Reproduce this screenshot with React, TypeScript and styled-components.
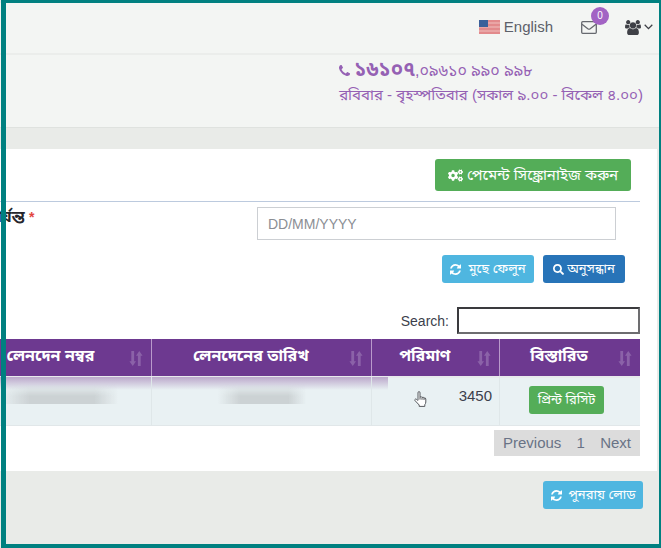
import React from 'react';
import styled, { createGlobalStyle } from 'styled-components';
import { FaCogs, FaSearch } from 'react-icons/fa';

const sans = `"Liberation Sans", "Noto Sans Bengali", sans-serif`;

const GlobalStyle = createGlobalStyle`
  *, *::before, *::after { box-sizing: border-box; }
  body { margin: 0; font-family: ${sans}; color: #3c3f4c; background: #e9ebe8; }
  button, input { font-family: inherit; }
`;

const Page = styled.div`
  position: relative;
  display: flex;
  flex-direction: column;
  min-height: 100vh;
  padding-top: 3px;
  overflow: hidden;
  background: #e9ebe8;

  &::after {
    content: '';
    position: absolute;
    inset: 0 0 0 1px;
    border: solid #008080;
    border-width: 3px 2px 4px 5px;
    pointer-events: none;
  }
`;

const TopBar = styled.nav`
  display: flex;
  align-items: center;
  justify-content: flex-end;
  height: 52px;
  padding: 0 8px 2px 0;
  background: #f3f5f3;
  border-bottom: 2px solid #ebedeb;
`;

const Language = styled.a`
  display: flex;
  align-items: center;
  gap: 4px;
  margin-right: 28px;
  color: #5c6069;
  font-size: 15px;
  line-height: 20px;
  text-decoration: none;
`;

const IconButton = styled.button<{ $end?: boolean }>`
  position: relative;
  display: flex;
  align-items: center;
  gap: 3px;
  margin-right: ${(p) => (p.$end ? '0' : '28px')};
  padding: 0;
  border: 0;
  background: none;
  color: ${(p) => (p.$end ? '#3e4046' : '#66696f')};
`;

const Badge = styled.span`
  position: absolute;
  right: -12px;
  bottom: 9px;
  width: 18px;
  height: 18px;
  border-radius: 50%;
  background: #a263c4;
  color: #fff;
  font-size: 10px;
  line-height: 18px;
  text-align: center;
`;

const Contact = styled.header`
  display: flex;
  justify-content: flex-end;
  height: 73px;
  padding: 2px 18px 0 0;
  background: #f3f5f3;
  border-bottom: 1px solid #dfe2df;
  color: #9561b4;
`;

const ContactText = styled.address`
  font-style: normal;
  font-size: 15px;
  line-height: 24px;

  p { margin: 0; white-space: nowrap; }
  p:first-child { font-size: 16px; }
  strong { margin-left: 4px; font-size: 20px; }
`;

const Card = styled.main`
  margin: 21px 4px 0 0;
  padding: 10px 17px 15px 0;
  background: #fff;
`;

const Actions = styled.div<{ $gap?: number; $right: number }>`
  display: flex;
  justify-content: flex-end;
  gap: ${(p) => p.$gap ?? 0}px;
  padding-right: ${(p) => p.$right}px;
`;

const tones = {
  green: '#54ad58',
  sky: '#4fb6e0',
  blue: '#2874b8',
};

const Button = styled.button<{ $tone: keyof typeof tones; $width: number; $large?: boolean }>`
  display: inline-flex;
  align-items: center;
  justify-content: center;
  gap: ${(p) => (p.$large ? 4 : p.$tone === 'sky' ? 7 : 3)}px;
  width: ${(p) => p.$width}px;
  height: ${(p) => (p.$large ? 32 : 28)}px;
  padding: 0;
  border: 0;
  border-radius: 3px;
  background: ${(p) => tones[p.$tone]};
  color: #fff;
  font-size: ${(p) => (p.$large ? 15 : 13)}px;
  line-height: 20px;
  white-space: nowrap;
`;

const Field = styled.div`
  display: grid;
  grid-template-columns: 257px 1fr;
  margin: 10px 0 15px;
  padding: 5px 24px 0 0;
  border-top: 1px solid #bccade;
`;

const Label = styled.label`
  justify-self: start;
  margin-left: -10px;
  font-size: 16px;
  font-weight: 700;
  line-height: 20px;
  color: #26262c;

  span { color: #e2453f; font-size: 14px; }
`;

const DateInput = styled.input`
  width: 100%;
  height: 33px;
  padding: 0 10px;
  border: 1px solid #cccfd3;
  border-radius: 0;
  background: #fff;
  font-size: 14px;

  &::placeholder { color: #8b8e94; }
`;

const SearchRow = styled.label`
  display: flex;
  align-items: center;
  justify-content: flex-end;
  gap: 8px;
  margin: 24px 0 5px;
  font-size: 14px;
`;

const SearchInput = styled.input`
  width: 183px;
  height: 27px;
  border: 2px solid #3a3a3d;
  border-right-color: #6d6d70;
  border-bottom-color: #6d6d70;
  background: #fff;
`;

const Table = styled.table`
  width: calc(100% + 28px);
  margin-left: -28px;
  table-layout: fixed;
  border-collapse: separate;
  border-spacing: 0;
`;

const HeadCell = styled.th<{ $width: string }>`
  width: ${(p) => p.$width};
  height: 37px;
  padding: 0 8px 4px;
  border-left: 1px solid #b99acb;
  background: #6d3990;
  color: #fff;
  font-size: 16px;
  line-height: 20px;

  &:first-child { border-left: 0; }
`;

const HeadContent = styled.div`
  display: grid;
  grid-template-columns: 1fr 22px;
  align-items: center;
  justify-items: end;
  white-space: nowrap;

  span { justify-self: center; }
  svg { margin-top: 6px; }
`;

const Cell = styled.td<{ $align?: 'right' | 'center' }>`
  position: relative;
  height: 50px;
  padding: 8px 7px 0 0;
  border-left: 1px solid #dfe7e9;
  border-top: 2px solid #e8eaec;
  border-bottom: 1px solid #e1e7e9;
  background: #e9f1f3;
  text-align: ${(p) => p.$align ?? 'left'};
  vertical-align: top;
  font-size: 15px;
  line-height: 20px;

  &:first-child { border-left: 0; }
`;

const Shade = styled.div<{ $partial?: boolean }>`
  position: absolute;
  top: -1px;
  left: 0;
  width: ${(p) => (p.$partial ? '16px' : 'calc(100% + 1px)')};
  height: 13px;
  background: linear-gradient(#bba8cb, #e9f1f3);
`;

const Redacted = styled.div<{ $left: string; $width: string }>`
  position: absolute;
  top: 6px;
  left: ${(p) => p.$left};
  width: ${(p) => p.$width};
  height: 20px;
  background: linear-gradient(90deg, transparent, #ccd2d4 25%, #ccd2d4 80%, transparent);
  mask-image: linear-gradient(transparent, #000 60%);
`;

const Pointer = styled.svg`
  position: absolute;
  left: 42px;
  top: 13px;
`;

const Pagination = styled.nav`
  display: flex;
  align-items: center;
  justify-content: space-between;
  width: 146px;
  height: 26px;
  margin: 4px 0 0 auto;
  padding: 0 9px;
  background: #dcdcdc;

  a { color: #697386; font-size: 15px; line-height: 20px; text-decoration: none; }
`;

const Footer = styled.footer`
  padding: 10px 0 35px;
`;

const Flag = () => (
  <svg width="21" height="14" viewBox="0 0 21 14" aria-hidden="true">
    <rect width="21" height="14" fill="#e9a5a5" />
    {[0, 4, 8, 12].map((y) => (
      <rect key={y} y={y} width="21" height="2" fill="#e28a8c" />
    ))}
    <rect width="9" height="7" fill="#3b609a" />
  </svg>
);

const Envelope = () => (
  <svg width="16" height="13" viewBox="0 0 16 13" fill="none" stroke="currentColor" strokeWidth="1.3" aria-hidden="true">
    <rect x="0.7" y="0.7" width="14.6" height="11.6" rx="1" />
    <path d="M1 3.2 6.8 7.8q1.2.8 2.4 0L15 3.2" />
  </svg>
);

const Users = () => (
  <svg width="16" height="15" viewBox="0 0 1920 1792" fill="currentColor" aria-hidden="true">
    <path d="M593 896q-162 5-265 128h-134q-82 0-138-40.5t-56-118.5q0-353 124-353 6 0 43.5 21t97.5 42.5 119 21.5q67 0 133-23-5 37-5 66 0 139 81 256zm1071 637q0 120-73 189.5t-194 69.5h-874q-121 0-194-69.5t-73-189.5q0-53 3.5-103.5t14-109 26.5-108.5 43-97.5 62-81 85.5-53.5 111.5-20q10 0 43 21.5t73 48 107 48 135 21.5 135-21.5 107-48 73-48 43-21.5q61 0 111.5 20t85.5 53.5 62 81 43 97.5 26.5 108.5 14 109 3.5 103.5zm-1024-1277q0 106-75 181t-181 75-181-75-75-181 75-181 181-75 181 75 75 181zm704 384q0 159-112.5 271.5t-271.5 112.5-271.5-112.5-112.5-271.5 112.5-271.5 271.5-112.5 271.5 112.5 112.5 271.5zm576 225q0 78-56 118.5t-138 40.5h-134q-103-123-265-128 81-117 81-256 0-29-5-66 66 23 133 23 59 0 119-21.5t97.5-42.5 43.5-21q124 0 124 353zm-128-609q0 106-75 181t-181 75-181-75-75-181 75-181 181-75 181 75 75 181z" />
  </svg>
);

const Chevron = () => (
  <svg width="9" height="6" viewBox="0 0 9 6" fill="none" stroke="currentColor" strokeWidth="1.3" aria-hidden="true">
    <path d="M.7.8 4.5 4.6 8.3.8" />
  </svg>
);

const Phone = () => (
  <svg width="11" height="11" viewBox="0 0 1408 1408" fill="currentColor" aria-hidden="true">
    <path d="M1408 1112q0 27-10 70.5t-21 68.5q-21 50-122 106-94 51-186 51-27 0-53-3.5t-57.5-12.5-47-14.5-55.5-20.5-49-18q-98-35-175-83-127-79-264-216t-216-264q-48-77-83-175-3-9-18-49t-20.5-55.5-14.5-47-12.5-57.5-3.5-53q0-92 51-186 56-101 106-122 25-11 68.5-21t70.5-10q14 0 21 3 18 6 53 76 11 19 30 54t35 63.5 31 53.5q3 4 17.5 25t21.5 35.5 7 28.5q0 20-28.5 50t-62 55-62 53-28.5 46q0 9 5 22.5t8.5 20.5 14 24 11.5 19q76 137 174 235t235 174q2 1 19 11.5t24 14 20.5 8.5 22.5 5q18 0 46-28.5t53-62 55-62 50-28.5q14 0 28.5 7t35.5 21.5 25 17.5q25 15 53.5 31t63.5 35 54 30q70 35 76 53 3 7 3 21z" />
  </svg>
);

const Refresh = () => (
  <svg width="11" height="11" viewBox="0 0 1536 1536" fill="currentColor" aria-hidden="true">
    <path d="M1511 928q0 5-1 7-64 268-268 434.5t-478 166.5q-146 0-282.5-55t-243.5-157l-129 129q-19 19-45 19t-45-19-19-45v-448q0-26 19-45t45-19h448q26 0 45 19t19 45-19 45l-137 137q71 66 161 102t187 36q134 0 250-65t186-179q11-17 53-117 8-23 30-23h192q13 0 22.5 9.5t9.5 22.5zm25-800v448q0 26-19 45t-45 19h-448q-26 0-45-19t-19-45 19-45l138-138q-148-137-349-137-134 0-250 65t-186 179q-11 17-53 117-8 23-30 23h-199q-13 0-22.5-9.5t-9.5-22.5v-7q65-268 270-434.5t480-166.5q146 0 284 55.5t245 156.5l130-129q19-19 45-19t45 19 19 45z" />
  </svg>
);

const SortArrows = () => (
  <svg width="14" height="15" viewBox="0 0 14 16" fill="#8b62a8" aria-hidden="true">
    <path d="M2 0h3v11h2l-3.5 5L0 11h2zM9 16h3V5h2l-3.5-5L7 5h2z" />
  </svg>
);

const HandPointer = () => (
  <Pointer width="13" height="16" viewBox="0 0 13 16" fill="#fff" stroke="#55585c" strokeWidth="1" strokeLinejoin="round" aria-hidden="true">
    <path d="M4 9V1.8Q4 .6 5 .6t1 1.2V6q1.7-.8 2 .4 1.7-.6 2 .6 1.8-.4 1.8 1V11q0 1.5-1 2.7V15.4H5.2V14L1 9.6Q.5 8.4 1.5 8q1-.3 2.5 1.8M6 6v2.6M8 6.4v2.4M10 7v2" />
  </Pointer>
);

const columns = [
  { title: 'লেনদেন নম্বর', width: '26.8%' },
  { title: 'লেনদেনের তারিখ', width: '33%' },
  { title: 'পরিমাণ', width: '19.1%' },
  { title: 'বিস্তারিত', width: '21.1%' },
];

export default function App() {
  return (
    <>
      <GlobalStyle />
      <Page>
        <TopBar>
          <Language href="#language"><Flag />English</Language>
          <IconButton type="button" aria-label="Messages"><Envelope /><Badge>0</Badge></IconButton>
          <IconButton type="button" aria-label="Account" $end><Users /><Chevron /></IconButton>
        </TopBar>
        <Contact>
          <ContactText>
            <p><Phone /><strong>১৬১০৭</strong>,০৯৬১০ ৯৯০ ৯৯৮</p>
            <p>রবিবার - বৃহস্পতিবার (সকাল ৯.০০ - বিকেল ৪.০০)</p>
          </ContactText>
        </Contact>
        <Card>
          <Actions $right={9}>
            <Button type="button" $tone="green" $width={196} $large><FaCogs size={15} />পেমেন্ট সিঙ্ক্রোনাইজ করুন</Button>
          </Actions>
          <Field>
            <Label htmlFor="until">পর্যন্ত <span>*</span></Label>
            <DateInput id="until" placeholder="DD/MM/YYYY" />
          </Field>
          <Actions $gap={9} $right={15}>
            <Button type="button" $tone="sky" $width={92}><Refresh />মুছে ফেলুন</Button>
            <Button type="button" $tone="blue" $width={82}><FaSearch size={11} />অনুসন্ধান</Button>
          </Actions>
          <SearchRow>Search:<SearchInput type="search" /></SearchRow>
          <Table>
            <thead>
              <tr>
                {columns.map((c) => (
                  <HeadCell key={c.title} $width={c.width} scope="col">
                    <HeadContent><span>{c.title}</span><SortArrows /></HeadContent>
                  </HeadCell>
                ))}
              </tr>
            </thead>
            <tbody>
              <tr>
                <Cell><Shade /><Redacted $left="28px" $width="118px" /></Cell>
                <Cell><Shade /><Redacted $left="66px" $width="88px" /></Cell>
                <Cell $align="right"><Shade $partial /><HandPointer />3450</Cell>
                <Cell $align="center"><Button type="button" $tone="green" $width={75}>প্রিন্ট রিসিট</Button></Cell>
              </tr>
            </tbody>
          </Table>
          <Pagination aria-label="Pages">
            <a href="#previous">Previous</a><a href="#1">1</a><a href="#next">Next</a>
          </Pagination>
        </Card>
        <Footer>
          <Actions $right={18}>
            <Button type="button" $tone="sky" $width={100}><Refresh />পুনরায় লোড</Button>
          </Actions>
        </Footer>
      </Page>
    </>
  );
}
